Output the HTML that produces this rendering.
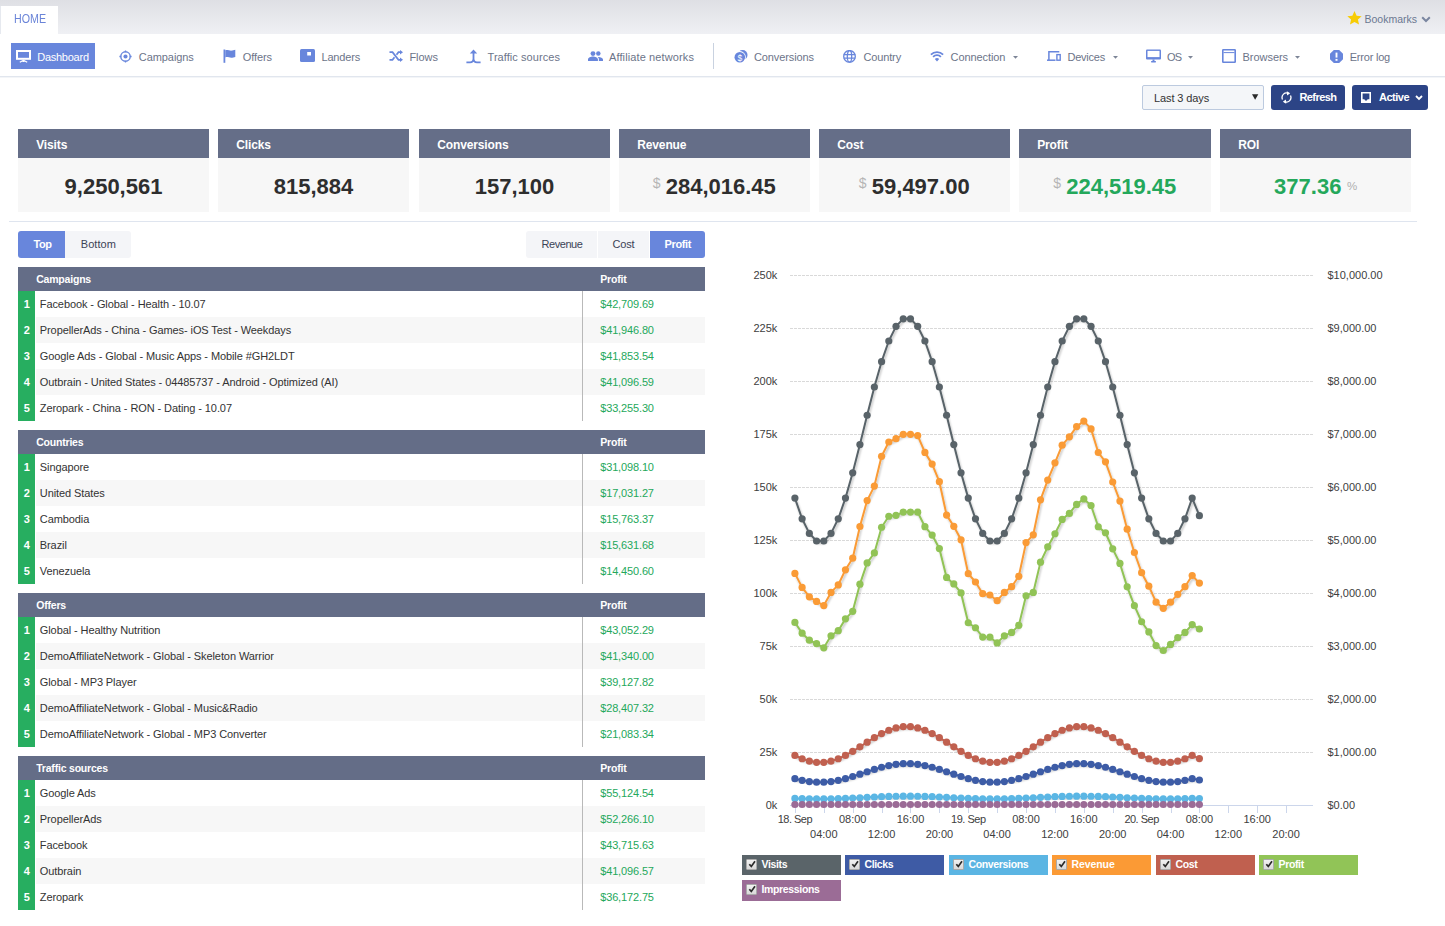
<!DOCTYPE html>
<html><head><meta charset="utf-8"><title>Dashboard</title>
<style>
html,body{margin:0;padding:0;}
body{width:1445px;height:926px;overflow:hidden;position:relative;background:#fff;font-family:"Liberation Sans", sans-serif;}
.t{position:absolute;white-space:pre;}
.b{position:absolute;}
</style></head><body>
<div class="b" style="left:0px;top:0px;width:1445px;height:34px;background:linear-gradient(#dedfe4,#eff0f4);"></div>
<div class="b" style="left:0px;top:6px;width:58px;height:28px;background:#fff;border-left:1px solid #e6e9ef;box-sizing:border-box;"></div>
<div class="t" style="left:13.90px;top:13.14px;font-size:12px;line-height:12px;color:#6a84d8;font-weight:normal;transform:scaleX(0.89);transform-origin:0 0;">HOME</div>
<svg class="b" style="left:1347px;top:11px" width="15" height="14" viewBox="0 0 24 23"><path d="M12 0l3.5 7.6 8.3.9-6.2 5.6 1.8 8.2L12 18.1 4.6 22.3l1.8-8.2L.2 8.5l8.3-.9z" fill="#f7cc05"/></svg>
<div class="t" style="left:1364.50px;top:13.71px;font-size:10.5px;line-height:10.5px;color:#6b7891;font-weight:normal;">Bookmarks</div>
<svg class="b" style="left:1421px;top:16px" width="10" height="7" viewBox="0 0 10 7"><path d="M1.2 1.3L5 5l3.8-3.7" stroke="#7a86a0" stroke-width="2" fill="none"/></svg>
<div class="b" style="left:0px;top:76px;width:1445px;height:1px;background:#e1e6ee;"></div>
<div class="b" style="left:0px;top:77px;width:1445px;height:1px;background:#f3f5f8;"></div>
<div class="b" style="left:11px;top:43px;width:84px;height:26px;background:#6886dc;"></div>
<div class="t" style="left:37.20px;top:52.49px;font-size:11px;line-height:11px;color:#fff;font-weight:normal;letter-spacing:-0.25px;">Dashboard</div>
<svg class="b" style="left:16px;top:50px" width="15" height="13" viewBox="0 0 15 13"><rect x="1" y="1" width="13" height="7.8" fill="none" stroke="#fff" stroke-width="2"/><path d="M7.5 9.8v2.3M7.5 10.2L3.8 12.2M7.5 10.2l3.7 2" stroke="#fff" stroke-width="1.3" fill="none"/></svg>
<div class="t" style="left:138.80px;top:52.49px;font-size:11px;line-height:11px;color:#6c7489;font-weight:normal;letter-spacing:-0.071px;">Campaigns</div>
<div class="t" style="left:242.80px;top:52.49px;font-size:11px;line-height:11px;color:#6c7489;font-weight:normal;letter-spacing:-0.094px;">Offers</div>
<div class="t" style="left:321.50px;top:52.49px;font-size:11px;line-height:11px;color:#6c7489;font-weight:normal;letter-spacing:-0.181px;">Landers</div>
<div class="t" style="left:409.40px;top:52.49px;font-size:11px;line-height:11px;color:#6c7489;font-weight:normal;letter-spacing:-0.026px;">Flows</div>
<div class="t" style="left:487.50px;top:52.49px;font-size:11px;line-height:11px;color:#6c7489;font-weight:normal;letter-spacing:0.065px;">Traffic sources</div>
<div class="t" style="left:609.00px;top:52.49px;font-size:11px;line-height:11px;color:#6c7489;font-weight:normal;letter-spacing:0.119px;">Affiliate networks</div>
<div class="t" style="left:754.00px;top:52.49px;font-size:11px;line-height:11px;color:#6c7489;font-weight:normal;letter-spacing:-0.104px;">Conversions</div>
<div class="t" style="left:863.50px;top:52.49px;font-size:11px;line-height:11px;color:#6c7489;font-weight:normal;letter-spacing:-0.147px;">Country</div>
<div class="t" style="left:950.60px;top:52.49px;font-size:11px;line-height:11px;color:#6c7489;font-weight:normal;letter-spacing:-0.086px;">Connection</div>
<div class="t" style="left:1067.50px;top:52.49px;font-size:11px;line-height:11px;color:#6c7489;font-weight:normal;letter-spacing:-0.233px;">Devices</div>
<div class="t" style="left:1167.00px;top:52.49px;font-size:11px;line-height:11px;color:#6c7489;font-weight:normal;letter-spacing:-0.698px;">OS</div>
<div class="t" style="left:1242.60px;top:52.49px;font-size:11px;line-height:11px;color:#6c7489;font-weight:normal;letter-spacing:-0.056px;">Browsers</div>
<div class="t" style="left:1349.70px;top:52.49px;font-size:11px;line-height:11px;color:#6c7489;font-weight:normal;letter-spacing:-0.209px;">Error log</div>
<svg class="b" style="left:1012.5px;top:56.3px" width="6" height="4" viewBox="0 0 6 4"><path d="M0 0h5L2.5 2.8z" fill="#7d8597"/></svg>
<svg class="b" style="left:1112.9px;top:56.3px" width="6" height="4" viewBox="0 0 6 4"><path d="M0 0h5L2.5 2.8z" fill="#7d8597"/></svg>
<svg class="b" style="left:1188.0px;top:56.3px" width="6" height="4" viewBox="0 0 6 4"><path d="M0 0h5L2.5 2.8z" fill="#7d8597"/></svg>
<svg class="b" style="left:1294.5px;top:56.3px" width="6" height="4" viewBox="0 0 6 4"><path d="M0 0h5L2.5 2.8z" fill="#7d8597"/></svg>
<div class="b" style="left:713px;top:43px;width:1px;height:26px;background:#c9d2e0;"></div>
<svg class="b" style="left:118.5px;top:49.6px" width="13" height="13" viewBox="0 0 13 13"><circle cx="6.5" cy="6.5" r="4.7" fill="none" stroke="#6886dc" stroke-width="1.4"/><circle cx="6.5" cy="6.5" r="2.05" fill="#6886dc"/><path d="M6.5 0.4v1.8M6.5 10.8v1.8M0.4 6.5h1.8M10.8 6.5h1.8" stroke="#6886dc" stroke-width="1.3"/></svg>
<svg class="b" style="left:222.5px;top:49px" width="13" height="14" viewBox="0 0 13 14"><path d="M0.5 0.5h1.8v13.3H0.5z" fill="#6886dc"/><path d="M2.3 1.2c2.5-1 4.5 1 7 0.3l3-0.8v7.2l-3 .8c-2.5.7-4.5-1.3-7-.3z" fill="#6886dc"/></svg>
<svg class="b" style="left:300px;top:49px" width="15" height="13" viewBox="0 0 15 13"><rect x="0" y="0" width="15" height="13" rx="1.5" fill="#6886dc"/><rect x="7.2" y="3" width="3.8" height="3.5" fill="#fff"/></svg>
<svg class="b" style="left:388.5px;top:50px" width="14" height="12" viewBox="0 0 14 12"><path d="M0.5 2.2h3l6 7.6h2.5M0.5 9.8h3l2-2.6M7.5 4.8l2-2.6h2.5" stroke="#6886dc" stroke-width="1.7" fill="none"/><path d="M11 0l3 2.2-3 2.2zM11 7.6l3 2.2-3 2.2z" fill="#6886dc"/></svg>
<svg class="b" style="left:466px;top:48.5px" width="15" height="15" viewBox="0 0 15 15"><path d="M7.5 3.5V9.5Q7.5 13.3 4 13.3H0.4M7.5 9.5Q7.5 13.3 11 13.3H14.6" stroke="#6886dc" stroke-width="1.8" fill="none"/><path d="M3.8 4.6L7.5 0.6l3.7 4z" fill="#6886dc"/></svg>
<svg class="b" style="left:588px;top:50.8px" width="15" height="10" viewBox="0 0 16 11" preserveAspectRatio="none"><circle cx="5.3" cy="2.8" r="2.6" fill="#6886dc"/><circle cx="11" cy="2.8" r="2.4" fill="#6886dc"/><path d="M0 11v-1.8c0-2 3-3.2 5.3-3.2s5.3 1.2 5.3 3.2V11zM11.6 11V9.2c0-1-.5-1.9-1.3-2.5.4-.1.8-.1 1-.1 2 0 4.7 1 4.7 2.8V11z" fill="#6886dc"/></svg>
<svg class="b" style="left:734px;top:49.5px" width="14" height="13" viewBox="0 0 14 13"><circle cx="8.6" cy="5" r="4.9" fill="#6886dc"/><circle cx="5.8" cy="7.2" r="6.1" fill="#fff"/><circle cx="5.8" cy="7.2" r="5.3" fill="#6886dc"/><text x="5.8" y="10.6" font-size="8.5" font-family="Liberation Sans" fill="#fff" text-anchor="middle">$</text></svg>
<svg class="b" style="left:843px;top:49.7px" width="13" height="13" viewBox="0 0 13 13"><circle cx="6.5" cy="6.4" r="5.8" fill="none" stroke="#6886dc" stroke-width="1.3"/><ellipse cx="6.5" cy="6.4" rx="2.2" ry="5.8" fill="none" stroke="#6886dc" stroke-width="1.3"/><path d="M0.8 4.6h11.4M0.8 8.2h11.4" stroke="#6886dc" stroke-width="1.3"/></svg>
<svg class="b" style="left:930px;top:51px" width="14" height="11" viewBox="0 0 14 11"><path d="M0.9 3.6a8.6 8.6 0 0 1 12.2 0M3.1 5.9a5.3 5.3 0 0 1 7.8 0" stroke="#6886dc" stroke-width="1.8" fill="none"/><path d="M4.8 8.1a3.1 3.1 0 0 1 4.4 0L7 10.6z" fill="#6886dc"/></svg>
<svg class="b" style="left:1047px;top:51px" width="14" height="10" viewBox="0 0 14 10"><path d="M1.9 9V0.8h10.4" stroke="#6886dc" stroke-width="1.5" fill="none"/><path d="M0 9.2h8.5" stroke="#6886dc" stroke-width="1.5"/><rect x="9.9" y="3.6" width="3.3" height="5.6" fill="none" stroke="#6886dc" stroke-width="1.4"/></svg>
<svg class="b" style="left:1146px;top:49px" width="15" height="14" viewBox="0 0 15 14"><rect x="0" y="0.4" width="15" height="10.2" rx="1" fill="#6886dc"/><rect x="1.5" y="1.9" width="12" height="6.2" fill="#fff"/><path d="M6.5 10.5h2v1.5h-2z" fill="#6886dc"/><rect x="5" y="12" width="5" height="1.4" rx="0.6" fill="#6886dc"/></svg>
<svg class="b" style="left:1222px;top:49px" width="14" height="14" viewBox="0 0 14 14"><rect x="0.8" y="0.8" width="12.4" height="12.4" rx="0.5" fill="none" stroke="#6886dc" stroke-width="1.6"/><path d="M1.5 3.6h11" stroke="#6886dc" stroke-width="1"/></svg>
<svg class="b" style="left:1329.5px;top:49.8px" width="13" height="13" viewBox="0 0 13 13"><path d="M3.8 0h5.4L13 3.8v5.4L9.2 13H3.8L0 9.2V3.8z" fill="#6886dc"/><path d="M6.5 2.6v5" stroke="#fff" stroke-width="1.9"/><rect x="5.5" y="8.9" width="2" height="1.9" fill="#fff"/></svg>
<div class="b" style="left:1142px;top:85px;width:122px;height:25px;background:#f4f6f9;border:1px solid #bccadf;border-radius:2px;box-sizing:border-box;"></div>
<div class="t" style="left:1154.00px;top:92.69px;font-size:11px;line-height:11px;color:#333;font-weight:normal;letter-spacing:-0.1px;">Last 3 days</div>
<svg class="b" style="left:1252px;top:94px" width="6.5" height="6" viewBox="0 0 6.5 6"><path d="M0 0.3h6.3L3.15 5.8z" fill="#2a2a2a"/></svg>
<div class="b" style="left:1271px;top:85px;width:74px;height:25px;background:#2c4486;border-radius:3px;"></div>
<div class="t" style="left:1299.40px;top:92.49px;font-size:11px;line-height:11px;color:#fff;font-weight:bold;letter-spacing:-0.55px;">Refresh</div>
<svg class="b" style="left:1280.5px;top:91px" width="11" height="13" viewBox="0 0 11 13"><path d="M7.6 2.6A4.3 4.6 0 0 0 1.5 8.5M3.4 10.4A4.3 4.6 0 0 0 9.5 4.5" stroke="#fff" stroke-width="1.3" fill="none"/><path d="M5.8 0.3l3.4 1.9-3.1 2.3zM5.2 12.7l-3.4-1.9 3.1-2.3z" fill="#fff"/></svg>
<div class="b" style="left:1352px;top:85px;width:76px;height:25px;background:#2c4486;border-radius:3px;"></div>
<svg class="b" style="left:1361px;top:92px" width="10" height="11" viewBox="0 0 10 11"><path d="M0 0h10v11H0z" fill="#fff"/><path d="M1.6 1.6h6.8v5.6H6.6L5.9 8.4H4.1L3.4 7.2H1.6z" fill="#2c4486"/></svg>
<div class="t" style="left:1379.00px;top:92.49px;font-size:11px;line-height:11px;color:#fff;font-weight:bold;letter-spacing:-0.5px;">Active</div>
<svg class="b" style="left:1414.5px;top:95px" width="8" height="6" viewBox="0 0 8 6"><path d="M1 1l3 3 3-3" stroke="#fff" stroke-width="1.8" fill="none"/></svg>
<div class="b" style="left:18px;top:129px;width:191px;height:29px;background:#656e88;"></div>
<div class="b" style="left:18px;top:158px;width:191px;height:54px;background:#f7f7f7;"></div>
<div class="t" style="left:36.20px;top:138.74px;font-size:12px;line-height:12px;color:#fff;font-weight:bold;letter-spacing:-0.12px;">Visits</div>
<div class="t" style="left:-186.50px;width:600px;text-align:center;top:175.98px;font-size:22px;line-height:22px;color:#2e2e2e;font-weight:bold;">9,250,561</div>
<div class="b" style="left:218px;top:129px;width:191px;height:29px;background:#656e88;"></div>
<div class="b" style="left:218px;top:158px;width:191px;height:54px;background:#f7f7f7;"></div>
<div class="t" style="left:236.20px;top:138.74px;font-size:12px;line-height:12px;color:#fff;font-weight:bold;letter-spacing:-0.12px;">Clicks</div>
<div class="t" style="left:13.50px;width:600px;text-align:center;top:175.98px;font-size:22px;line-height:22px;color:#2e2e2e;font-weight:bold;">815,884</div>
<div class="b" style="left:419px;top:129px;width:191px;height:29px;background:#656e88;"></div>
<div class="b" style="left:419px;top:158px;width:191px;height:54px;background:#f7f7f7;"></div>
<div class="t" style="left:437.20px;top:138.74px;font-size:12px;line-height:12px;color:#fff;font-weight:bold;letter-spacing:-0.12px;">Conversions</div>
<div class="t" style="left:214.50px;width:600px;text-align:center;top:175.98px;font-size:22px;line-height:22px;color:#2e2e2e;font-weight:bold;">157,100</div>
<div class="b" style="left:619px;top:129px;width:191px;height:29px;background:#656e88;"></div>
<div class="b" style="left:619px;top:158px;width:191px;height:54px;background:#f7f7f7;"></div>
<div class="t" style="left:637.20px;top:138.74px;font-size:12px;line-height:12px;color:#fff;font-weight:bold;letter-spacing:-0.12px;">Revenue</div>
<div class="t" style="left:652.70px;top:176.15px;font-size:14px;line-height:14px;color:#b5b5b5;font-weight:normal;letter-spacing:-0.3px;">$</div>
<div class="t" style="left:665.70px;top:175.98px;font-size:22px;line-height:22px;color:#2e2e2e;font-weight:bold;">284,016.45</div>
<div class="b" style="left:819px;top:129px;width:191px;height:29px;background:#656e88;"></div>
<div class="b" style="left:819px;top:158px;width:191px;height:54px;background:#f7f7f7;"></div>
<div class="t" style="left:837.20px;top:138.74px;font-size:12px;line-height:12px;color:#fff;font-weight:bold;letter-spacing:-0.12px;">Cost</div>
<div class="t" style="left:858.81px;top:176.15px;font-size:14px;line-height:14px;color:#b5b5b5;font-weight:normal;letter-spacing:-0.3px;">$</div>
<div class="t" style="left:871.81px;top:175.98px;font-size:22px;line-height:22px;color:#2e2e2e;font-weight:bold;">59,497.00</div>
<div class="b" style="left:1019px;top:129px;width:192px;height:29px;background:#656e88;"></div>
<div class="b" style="left:1019px;top:158px;width:192px;height:54px;background:#f7f7f7;"></div>
<div class="t" style="left:1037.20px;top:138.74px;font-size:12px;line-height:12px;color:#fff;font-weight:bold;letter-spacing:-0.12px;">Profit</div>
<div class="t" style="left:1053.19px;top:176.15px;font-size:14px;line-height:14px;color:#b5b5b5;font-weight:normal;letter-spacing:-0.3px;">$</div>
<div class="t" style="left:1066.19px;top:175.98px;font-size:22px;line-height:22px;color:#24a85b;font-weight:bold;">224,519.45</div>
<div class="b" style="left:1220px;top:129px;width:191px;height:29px;background:#656e88;"></div>
<div class="b" style="left:1220px;top:158px;width:191px;height:54px;background:#f7f7f7;"></div>
<div class="t" style="left:1238.20px;top:138.74px;font-size:12px;line-height:12px;color:#fff;font-weight:bold;letter-spacing:-0.12px;">ROI</div>
<div class="t" style="left:1274.10px;top:175.98px;font-size:22px;line-height:22px;color:#24a85b;font-weight:bold;">377.36</div>
<div class="t" style="left:1346.90px;top:181.07px;font-size:11.5px;line-height:11.5px;color:#b0b0b0;font-weight:normal;">%</div>
<div class="b" style="left:9px;top:221px;width:1408px;height:1px;background:#dfe5ef;"></div>
<div class="b" style="left:18px;top:231px;width:47px;height:27px;background:#6886dc;border-radius:3px 0 0 3px;"></div>
<div class="b" style="left:65px;top:231px;width:66px;height:27px;background:#f4f5f8;border-radius:0 3px 3px 0;"></div>
<div class="t" style="left:33.40px;top:238.69px;font-size:11px;line-height:11px;color:#fff;font-weight:bold;letter-spacing:-0.4px;">Top</div>
<div class="t" style="left:80.80px;top:238.69px;font-size:11px;line-height:11px;color:#3b4356;font-weight:normal;letter-spacing:0.05px;">Bottom</div>
<div class="b" style="left:526px;top:231px;width:71px;height:27px;background:#f4f5f8;border-radius:3px 0 0 3px;"></div>
<div class="b" style="left:598px;top:231px;width:51px;height:27px;background:#f4f5f8;"></div>
<div class="b" style="left:650px;top:231px;width:55px;height:27px;background:#6886dc;border-radius:0 3px 3px 0;"></div>
<div class="t" style="left:541.50px;top:238.69px;font-size:11px;line-height:11px;color:#3b4356;font-weight:normal;letter-spacing:-0.45px;">Revenue</div>
<div class="t" style="left:612.50px;top:238.69px;font-size:11px;line-height:11px;color:#3b4356;font-weight:normal;letter-spacing:-0.2px;">Cost</div>
<div class="t" style="left:664.60px;top:238.69px;font-size:11px;line-height:11px;color:#fff;font-weight:bold;letter-spacing:-0.4px;">Profit</div>
<div class="b" style="left:18px;top:267px;width:687px;height:24px;background:#646d87;"></div>
<div class="t" style="left:36.20px;top:274.11px;font-size:10.5px;line-height:10.5px;color:#fff;font-weight:bold;letter-spacing:-0.2px;">Campaigns</div>
<div class="t" style="left:600.30px;top:274.11px;font-size:10.5px;line-height:10.5px;color:#fff;font-weight:bold;letter-spacing:-0.2px;">Profit</div>
<div class="b" style="left:18px;top:291px;width:17px;height:130px;background:#27ae60;"></div>
<div class="t" style="left:23.80px;top:298.99px;font-size:11px;line-height:11px;color:#fff;font-weight:bold;">1</div>
<div class="t" style="left:39.80px;top:298.99px;font-size:11px;line-height:11px;color:#333;font-weight:normal;letter-spacing:-0.09px;">Facebook - Global - Health - 10.07</div>
<div class="t" style="left:600.20px;top:298.99px;font-size:11px;line-height:11px;color:#24a85b;font-weight:normal;letter-spacing:-0.14px;">$42,709.69</div>
<div class="b" style="left:36px;top:317px;width:669px;height:26px;background:#f7f7f7;"></div>
<div class="t" style="left:23.80px;top:324.99px;font-size:11px;line-height:11px;color:#fff;font-weight:bold;">2</div>
<div class="t" style="left:39.80px;top:324.99px;font-size:11px;line-height:11px;color:#333;font-weight:normal;letter-spacing:-0.09px;">PropellerAds - China - Games- iOS Test - Weekdays</div>
<div class="t" style="left:600.20px;top:324.99px;font-size:11px;line-height:11px;color:#24a85b;font-weight:normal;letter-spacing:-0.14px;">$41,946.80</div>
<div class="t" style="left:23.80px;top:350.99px;font-size:11px;line-height:11px;color:#fff;font-weight:bold;">3</div>
<div class="t" style="left:39.80px;top:350.99px;font-size:11px;line-height:11px;color:#333;font-weight:normal;letter-spacing:-0.09px;">Google Ads - Global - Music Apps - Mobile #GH2LDT</div>
<div class="t" style="left:600.20px;top:350.99px;font-size:11px;line-height:11px;color:#24a85b;font-weight:normal;letter-spacing:-0.14px;">$41,853.54</div>
<div class="b" style="left:36px;top:369px;width:669px;height:26px;background:#f7f7f7;"></div>
<div class="t" style="left:23.80px;top:376.99px;font-size:11px;line-height:11px;color:#fff;font-weight:bold;">4</div>
<div class="t" style="left:39.80px;top:376.99px;font-size:11px;line-height:11px;color:#333;font-weight:normal;letter-spacing:-0.09px;">Outbrain - United States - 04485737 - Android - Optimized (AI)</div>
<div class="t" style="left:600.20px;top:376.99px;font-size:11px;line-height:11px;color:#24a85b;font-weight:normal;letter-spacing:-0.14px;">$41,096.59</div>
<div class="t" style="left:23.80px;top:402.99px;font-size:11px;line-height:11px;color:#fff;font-weight:bold;">5</div>
<div class="t" style="left:39.80px;top:402.99px;font-size:11px;line-height:11px;color:#333;font-weight:normal;letter-spacing:-0.09px;">Zeropark - China - RON - Dating - 10.07</div>
<div class="t" style="left:600.20px;top:402.99px;font-size:11px;line-height:11px;color:#24a85b;font-weight:normal;letter-spacing:-0.14px;">$33,255.30</div>
<div class="b" style="left:582px;top:291px;width:1px;height:130px;background:#b9b9b9;"></div>
<div class="b" style="left:18px;top:430px;width:687px;height:24px;background:#646d87;"></div>
<div class="t" style="left:36.20px;top:437.11px;font-size:10.5px;line-height:10.5px;color:#fff;font-weight:bold;letter-spacing:-0.2px;">Countries</div>
<div class="t" style="left:600.30px;top:437.11px;font-size:10.5px;line-height:10.5px;color:#fff;font-weight:bold;letter-spacing:-0.2px;">Profit</div>
<div class="b" style="left:18px;top:454px;width:17px;height:130px;background:#27ae60;"></div>
<div class="t" style="left:23.80px;top:461.99px;font-size:11px;line-height:11px;color:#fff;font-weight:bold;">1</div>
<div class="t" style="left:39.80px;top:461.99px;font-size:11px;line-height:11px;color:#333;font-weight:normal;letter-spacing:-0.09px;">Singapore</div>
<div class="t" style="left:600.20px;top:461.99px;font-size:11px;line-height:11px;color:#24a85b;font-weight:normal;letter-spacing:-0.14px;">$31,098.10</div>
<div class="b" style="left:36px;top:480px;width:669px;height:26px;background:#f7f7f7;"></div>
<div class="t" style="left:23.80px;top:487.99px;font-size:11px;line-height:11px;color:#fff;font-weight:bold;">2</div>
<div class="t" style="left:39.80px;top:487.99px;font-size:11px;line-height:11px;color:#333;font-weight:normal;letter-spacing:-0.09px;">United States</div>
<div class="t" style="left:600.20px;top:487.99px;font-size:11px;line-height:11px;color:#24a85b;font-weight:normal;letter-spacing:-0.14px;">$17,031.27</div>
<div class="t" style="left:23.80px;top:513.99px;font-size:11px;line-height:11px;color:#fff;font-weight:bold;">3</div>
<div class="t" style="left:39.80px;top:513.99px;font-size:11px;line-height:11px;color:#333;font-weight:normal;letter-spacing:-0.09px;">Cambodia</div>
<div class="t" style="left:600.20px;top:513.99px;font-size:11px;line-height:11px;color:#24a85b;font-weight:normal;letter-spacing:-0.14px;">$15,763.37</div>
<div class="b" style="left:36px;top:532px;width:669px;height:26px;background:#f7f7f7;"></div>
<div class="t" style="left:23.80px;top:539.99px;font-size:11px;line-height:11px;color:#fff;font-weight:bold;">4</div>
<div class="t" style="left:39.80px;top:539.99px;font-size:11px;line-height:11px;color:#333;font-weight:normal;letter-spacing:-0.09px;">Brazil</div>
<div class="t" style="left:600.20px;top:539.99px;font-size:11px;line-height:11px;color:#24a85b;font-weight:normal;letter-spacing:-0.14px;">$15,631.68</div>
<div class="t" style="left:23.80px;top:565.99px;font-size:11px;line-height:11px;color:#fff;font-weight:bold;">5</div>
<div class="t" style="left:39.80px;top:565.99px;font-size:11px;line-height:11px;color:#333;font-weight:normal;letter-spacing:-0.09px;">Venezuela</div>
<div class="t" style="left:600.20px;top:565.99px;font-size:11px;line-height:11px;color:#24a85b;font-weight:normal;letter-spacing:-0.14px;">$14,450.60</div>
<div class="b" style="left:582px;top:454px;width:1px;height:130px;background:#b9b9b9;"></div>
<div class="b" style="left:18px;top:593px;width:687px;height:24px;background:#646d87;"></div>
<div class="t" style="left:36.20px;top:600.11px;font-size:10.5px;line-height:10.5px;color:#fff;font-weight:bold;letter-spacing:-0.2px;">Offers</div>
<div class="t" style="left:600.30px;top:600.11px;font-size:10.5px;line-height:10.5px;color:#fff;font-weight:bold;letter-spacing:-0.2px;">Profit</div>
<div class="b" style="left:18px;top:617px;width:17px;height:130px;background:#27ae60;"></div>
<div class="t" style="left:23.80px;top:624.99px;font-size:11px;line-height:11px;color:#fff;font-weight:bold;">1</div>
<div class="t" style="left:39.80px;top:624.99px;font-size:11px;line-height:11px;color:#333;font-weight:normal;letter-spacing:-0.09px;">Global - Healthy Nutrition</div>
<div class="t" style="left:600.20px;top:624.99px;font-size:11px;line-height:11px;color:#24a85b;font-weight:normal;letter-spacing:-0.14px;">$43,052.29</div>
<div class="b" style="left:36px;top:643px;width:669px;height:26px;background:#f7f7f7;"></div>
<div class="t" style="left:23.80px;top:650.99px;font-size:11px;line-height:11px;color:#fff;font-weight:bold;">2</div>
<div class="t" style="left:39.80px;top:650.99px;font-size:11px;line-height:11px;color:#333;font-weight:normal;letter-spacing:-0.09px;">DemoAffiliateNetwork - Global - Skeleton Warrior</div>
<div class="t" style="left:600.20px;top:650.99px;font-size:11px;line-height:11px;color:#24a85b;font-weight:normal;letter-spacing:-0.14px;">$41,340.00</div>
<div class="t" style="left:23.80px;top:676.99px;font-size:11px;line-height:11px;color:#fff;font-weight:bold;">3</div>
<div class="t" style="left:39.80px;top:676.99px;font-size:11px;line-height:11px;color:#333;font-weight:normal;letter-spacing:-0.09px;">Global - MP3 Player</div>
<div class="t" style="left:600.20px;top:676.99px;font-size:11px;line-height:11px;color:#24a85b;font-weight:normal;letter-spacing:-0.14px;">$39,127.82</div>
<div class="b" style="left:36px;top:695px;width:669px;height:26px;background:#f7f7f7;"></div>
<div class="t" style="left:23.80px;top:702.99px;font-size:11px;line-height:11px;color:#fff;font-weight:bold;">4</div>
<div class="t" style="left:39.80px;top:702.99px;font-size:11px;line-height:11px;color:#333;font-weight:normal;letter-spacing:-0.09px;">DemoAffiliateNetwork - Global - Music&amp;Radio</div>
<div class="t" style="left:600.20px;top:702.99px;font-size:11px;line-height:11px;color:#24a85b;font-weight:normal;letter-spacing:-0.14px;">$28,407.32</div>
<div class="t" style="left:23.80px;top:728.99px;font-size:11px;line-height:11px;color:#fff;font-weight:bold;">5</div>
<div class="t" style="left:39.80px;top:728.99px;font-size:11px;line-height:11px;color:#333;font-weight:normal;letter-spacing:-0.09px;">DemoAffiliateNetwork - Global - MP3 Converter</div>
<div class="t" style="left:600.20px;top:728.99px;font-size:11px;line-height:11px;color:#24a85b;font-weight:normal;letter-spacing:-0.14px;">$21,083.34</div>
<div class="b" style="left:582px;top:617px;width:1px;height:130px;background:#b9b9b9;"></div>
<div class="b" style="left:18px;top:756px;width:687px;height:24px;background:#646d87;"></div>
<div class="t" style="left:36.20px;top:763.11px;font-size:10.5px;line-height:10.5px;color:#fff;font-weight:bold;letter-spacing:-0.2px;">Traffic sources</div>
<div class="t" style="left:600.30px;top:763.11px;font-size:10.5px;line-height:10.5px;color:#fff;font-weight:bold;letter-spacing:-0.2px;">Profit</div>
<div class="b" style="left:18px;top:780px;width:17px;height:130px;background:#27ae60;"></div>
<div class="t" style="left:23.80px;top:787.99px;font-size:11px;line-height:11px;color:#fff;font-weight:bold;">1</div>
<div class="t" style="left:39.80px;top:787.99px;font-size:11px;line-height:11px;color:#333;font-weight:normal;letter-spacing:-0.09px;">Google Ads</div>
<div class="t" style="left:600.20px;top:787.99px;font-size:11px;line-height:11px;color:#24a85b;font-weight:normal;letter-spacing:-0.14px;">$55,124.54</div>
<div class="b" style="left:36px;top:806px;width:669px;height:26px;background:#f7f7f7;"></div>
<div class="t" style="left:23.80px;top:813.99px;font-size:11px;line-height:11px;color:#fff;font-weight:bold;">2</div>
<div class="t" style="left:39.80px;top:813.99px;font-size:11px;line-height:11px;color:#333;font-weight:normal;letter-spacing:-0.09px;">PropellerAds</div>
<div class="t" style="left:600.20px;top:813.99px;font-size:11px;line-height:11px;color:#24a85b;font-weight:normal;letter-spacing:-0.14px;">$52,266.10</div>
<div class="t" style="left:23.80px;top:839.99px;font-size:11px;line-height:11px;color:#fff;font-weight:bold;">3</div>
<div class="t" style="left:39.80px;top:839.99px;font-size:11px;line-height:11px;color:#333;font-weight:normal;letter-spacing:-0.09px;">Facebook</div>
<div class="t" style="left:600.20px;top:839.99px;font-size:11px;line-height:11px;color:#24a85b;font-weight:normal;letter-spacing:-0.14px;">$43,715.63</div>
<div class="b" style="left:36px;top:858px;width:669px;height:26px;background:#f7f7f7;"></div>
<div class="t" style="left:23.80px;top:865.99px;font-size:11px;line-height:11px;color:#fff;font-weight:bold;">4</div>
<div class="t" style="left:39.80px;top:865.99px;font-size:11px;line-height:11px;color:#333;font-weight:normal;letter-spacing:-0.09px;">Outbrain</div>
<div class="t" style="left:600.20px;top:865.99px;font-size:11px;line-height:11px;color:#24a85b;font-weight:normal;letter-spacing:-0.14px;">$41,096.57</div>
<div class="t" style="left:23.80px;top:891.99px;font-size:11px;line-height:11px;color:#fff;font-weight:bold;">5</div>
<div class="t" style="left:39.80px;top:891.99px;font-size:11px;line-height:11px;color:#333;font-weight:normal;letter-spacing:-0.09px;">Zeropark</div>
<div class="t" style="left:600.20px;top:891.99px;font-size:11px;line-height:11px;color:#24a85b;font-weight:normal;letter-spacing:-0.14px;">$36,172.75</div>
<div class="b" style="left:582px;top:780px;width:1px;height:130px;background:#b9b9b9;"></div>
<svg class="b" style="left:0;top:0" width="1445" height="926" viewBox="0 0 1445 926">
<defs><filter id="sh" x="-5%" y="-5%" width="110%" height="110%"><feGaussianBlur in="SourceAlpha" stdDeviation="1.2"/><feOffset dx="1" dy="1.5"/><feComponentTransfer><feFuncA type="linear" slope="0.25"/></feComponentTransfer><feMerge><feMergeNode/><feMergeNode in="SourceGraphic"/></feMerge></filter></defs>
<path d="M790 275.5H1313" stroke="#d9d9d9" stroke-width="1" stroke-dasharray="3,1"/>
<path d="M790 328.5H1313" stroke="#d9d9d9" stroke-width="1" stroke-dasharray="3,1"/>
<path d="M790 381.5H1313" stroke="#d9d9d9" stroke-width="1" stroke-dasharray="3,1"/>
<path d="M790 434.5H1313" stroke="#d9d9d9" stroke-width="1" stroke-dasharray="3,1"/>
<path d="M790 487.5H1313" stroke="#d9d9d9" stroke-width="1" stroke-dasharray="3,1"/>
<path d="M790 540.5H1313" stroke="#d9d9d9" stroke-width="1" stroke-dasharray="3,1"/>
<path d="M790 593.5H1313" stroke="#d9d9d9" stroke-width="1" stroke-dasharray="3,1"/>
<path d="M790 646.5H1313" stroke="#d9d9d9" stroke-width="1" stroke-dasharray="3,1"/>
<path d="M790 699.5H1313" stroke="#d9d9d9" stroke-width="1" stroke-dasharray="3,1"/>
<path d="M790 752.5H1313" stroke="#d9d9d9" stroke-width="1" stroke-dasharray="3,1"/>
<path d="M790 805.5H1313" stroke="#ccd6eb" stroke-width="1"/>
<path d="M795.5 806V813" stroke="#ccd6eb" stroke-width="1"/>
<path d="M824.5 806V813" stroke="#ccd6eb" stroke-width="1"/>
<path d="M853.5 806V813" stroke="#ccd6eb" stroke-width="1"/>
<path d="M882.5 806V813" stroke="#ccd6eb" stroke-width="1"/>
<path d="M910.5 806V813" stroke="#ccd6eb" stroke-width="1"/>
<path d="M939.5 806V813" stroke="#ccd6eb" stroke-width="1"/>
<path d="M968.5 806V813" stroke="#ccd6eb" stroke-width="1"/>
<path d="M997.5 806V813" stroke="#ccd6eb" stroke-width="1"/>
<path d="M1026.5 806V813" stroke="#ccd6eb" stroke-width="1"/>
<path d="M1055.5 806V813" stroke="#ccd6eb" stroke-width="1"/>
<path d="M1084.5 806V813" stroke="#ccd6eb" stroke-width="1"/>
<path d="M1113.5 806V813" stroke="#ccd6eb" stroke-width="1"/>
<path d="M1142.5 806V813" stroke="#ccd6eb" stroke-width="1"/>
<path d="M1171.5 806V813" stroke="#ccd6eb" stroke-width="1"/>
<path d="M1199.5 806V813" stroke="#ccd6eb" stroke-width="1"/>
<path d="M1228.5 806V813" stroke="#ccd6eb" stroke-width="1"/>
<path d="M1257.5 806V813" stroke="#ccd6eb" stroke-width="1"/>
<path d="M1286.5 806V813" stroke="#ccd6eb" stroke-width="1"/>
<text x="777.3" y="279.2" text-anchor="end" font-family="Liberation Sans, sans-serif" font-size="11" fill="#404040">250k</text>
<text x="1327.5" y="279.2" font-family="Liberation Sans, sans-serif" font-size="11" fill="#404040">$10,000.00</text>
<text x="777.3" y="332.2" text-anchor="end" font-family="Liberation Sans, sans-serif" font-size="11" fill="#404040">225k</text>
<text x="1327.5" y="332.2" font-family="Liberation Sans, sans-serif" font-size="11" fill="#404040">$9,000.00</text>
<text x="777.3" y="385.2" text-anchor="end" font-family="Liberation Sans, sans-serif" font-size="11" fill="#404040">200k</text>
<text x="1327.5" y="385.2" font-family="Liberation Sans, sans-serif" font-size="11" fill="#404040">$8,000.00</text>
<text x="777.3" y="438.2" text-anchor="end" font-family="Liberation Sans, sans-serif" font-size="11" fill="#404040">175k</text>
<text x="1327.5" y="438.2" font-family="Liberation Sans, sans-serif" font-size="11" fill="#404040">$7,000.00</text>
<text x="777.3" y="491.2" text-anchor="end" font-family="Liberation Sans, sans-serif" font-size="11" fill="#404040">150k</text>
<text x="1327.5" y="491.2" font-family="Liberation Sans, sans-serif" font-size="11" fill="#404040">$6,000.00</text>
<text x="777.3" y="544.2" text-anchor="end" font-family="Liberation Sans, sans-serif" font-size="11" fill="#404040">125k</text>
<text x="1327.5" y="544.2" font-family="Liberation Sans, sans-serif" font-size="11" fill="#404040">$5,000.00</text>
<text x="777.3" y="597.2" text-anchor="end" font-family="Liberation Sans, sans-serif" font-size="11" fill="#404040">100k</text>
<text x="1327.5" y="597.2" font-family="Liberation Sans, sans-serif" font-size="11" fill="#404040">$4,000.00</text>
<text x="777.3" y="650.2" text-anchor="end" font-family="Liberation Sans, sans-serif" font-size="11" fill="#404040">75k</text>
<text x="1327.5" y="650.2" font-family="Liberation Sans, sans-serif" font-size="11" fill="#404040">$3,000.00</text>
<text x="777.3" y="703.2" text-anchor="end" font-family="Liberation Sans, sans-serif" font-size="11" fill="#404040">50k</text>
<text x="1327.5" y="703.2" font-family="Liberation Sans, sans-serif" font-size="11" fill="#404040">$2,000.00</text>
<text x="777.3" y="756.2" text-anchor="end" font-family="Liberation Sans, sans-serif" font-size="11" fill="#404040">25k</text>
<text x="1327.5" y="756.2" font-family="Liberation Sans, sans-serif" font-size="11" fill="#404040">$1,000.00</text>
<text x="777.3" y="809.2" text-anchor="end" font-family="Liberation Sans, sans-serif" font-size="11" fill="#404040">0k</text>
<text x="1327.5" y="809.2" font-family="Liberation Sans, sans-serif" font-size="11" fill="#404040">$0.00</text>
<text x="794.9" y="822.6" text-anchor="middle" font-family="Liberation Sans, sans-serif" font-size="11" fill="#404040" letter-spacing="-0.5">18. Sep</text>
<text x="823.8" y="837.9" text-anchor="middle" font-family="Liberation Sans, sans-serif" font-size="11" fill="#404040">04:00</text>
<text x="852.7" y="822.6" text-anchor="middle" font-family="Liberation Sans, sans-serif" font-size="11" fill="#404040" letter-spacing="0">08:00</text>
<text x="881.6" y="837.9" text-anchor="middle" font-family="Liberation Sans, sans-serif" font-size="11" fill="#404040">12:00</text>
<text x="910.5" y="822.6" text-anchor="middle" font-family="Liberation Sans, sans-serif" font-size="11" fill="#404040" letter-spacing="0">16:00</text>
<text x="939.4" y="837.9" text-anchor="middle" font-family="Liberation Sans, sans-serif" font-size="11" fill="#404040">20:00</text>
<text x="968.3" y="822.6" text-anchor="middle" font-family="Liberation Sans, sans-serif" font-size="11" fill="#404040" letter-spacing="-0.5">19. Sep</text>
<text x="997.1" y="837.9" text-anchor="middle" font-family="Liberation Sans, sans-serif" font-size="11" fill="#404040">04:00</text>
<text x="1026.0" y="822.6" text-anchor="middle" font-family="Liberation Sans, sans-serif" font-size="11" fill="#404040" letter-spacing="0">08:00</text>
<text x="1054.9" y="837.9" text-anchor="middle" font-family="Liberation Sans, sans-serif" font-size="11" fill="#404040">12:00</text>
<text x="1083.8" y="822.6" text-anchor="middle" font-family="Liberation Sans, sans-serif" font-size="11" fill="#404040" letter-spacing="0">16:00</text>
<text x="1112.7" y="837.9" text-anchor="middle" font-family="Liberation Sans, sans-serif" font-size="11" fill="#404040">20:00</text>
<text x="1141.6" y="822.6" text-anchor="middle" font-family="Liberation Sans, sans-serif" font-size="11" fill="#404040" letter-spacing="-0.5">20. Sep</text>
<text x="1170.5" y="837.9" text-anchor="middle" font-family="Liberation Sans, sans-serif" font-size="11" fill="#404040">04:00</text>
<text x="1199.4" y="822.6" text-anchor="middle" font-family="Liberation Sans, sans-serif" font-size="11" fill="#404040" letter-spacing="0">08:00</text>
<text x="1228.3" y="837.9" text-anchor="middle" font-family="Liberation Sans, sans-serif" font-size="11" fill="#404040">12:00</text>
<text x="1257.2" y="822.6" text-anchor="middle" font-family="Liberation Sans, sans-serif" font-size="11" fill="#404040" letter-spacing="0">16:00</text>
<text x="1286.1" y="837.9" text-anchor="middle" font-family="Liberation Sans, sans-serif" font-size="11" fill="#404040">20:00</text>
<polyline points="794.90,498.12 802.12,518.80 809.35,533.43 816.57,541.00 823.79,541.00 831.02,533.43 838.24,518.80 845.46,498.12 852.69,472.78 859.91,444.53 867.13,415.27 874.36,387.02 881.58,361.68 888.80,341.00 896.02,326.37 903.25,318.80 910.47,318.80 917.69,326.37 924.92,341.00 932.14,361.68 939.36,387.02 946.59,415.27 953.81,444.53 961.03,472.78 968.26,498.12 975.48,518.80 982.70,533.43 989.93,541.00 997.15,541.00 1004.37,533.43 1011.60,518.80 1018.82,498.12 1026.04,472.78 1033.27,444.53 1040.49,415.27 1047.71,387.02 1054.94,361.68 1062.16,341.00 1069.38,326.37 1076.60,318.80 1083.83,318.80 1091.05,326.37 1098.27,341.00 1105.50,361.68 1112.72,387.02 1119.94,415.27 1127.17,444.53 1134.39,472.78 1141.61,498.12 1148.84,518.80 1156.06,533.43 1163.28,541.00 1170.51,541.00 1177.73,533.43 1184.95,518.80 1192.18,498.12 1199.40,515.70" fill="none" stroke="#596369" stroke-width="2" stroke-linejoin="round" filter="url(#sh)"/>
<g fill="#596369"><circle cx="794.90" cy="498.12" r="3.6"/><circle cx="802.12" cy="518.80" r="3.6"/><circle cx="809.35" cy="533.43" r="3.6"/><circle cx="816.57" cy="541.00" r="3.6"/><circle cx="823.79" cy="541.00" r="3.6"/><circle cx="831.02" cy="533.43" r="3.6"/><circle cx="838.24" cy="518.80" r="3.6"/><circle cx="845.46" cy="498.12" r="3.6"/><circle cx="852.69" cy="472.78" r="3.6"/><circle cx="859.91" cy="444.53" r="3.6"/><circle cx="867.13" cy="415.27" r="3.6"/><circle cx="874.36" cy="387.02" r="3.6"/><circle cx="881.58" cy="361.68" r="3.6"/><circle cx="888.80" cy="341.00" r="3.6"/><circle cx="896.02" cy="326.37" r="3.6"/><circle cx="903.25" cy="318.80" r="3.6"/><circle cx="910.47" cy="318.80" r="3.6"/><circle cx="917.69" cy="326.37" r="3.6"/><circle cx="924.92" cy="341.00" r="3.6"/><circle cx="932.14" cy="361.68" r="3.6"/><circle cx="939.36" cy="387.02" r="3.6"/><circle cx="946.59" cy="415.27" r="3.6"/><circle cx="953.81" cy="444.53" r="3.6"/><circle cx="961.03" cy="472.78" r="3.6"/><circle cx="968.26" cy="498.12" r="3.6"/><circle cx="975.48" cy="518.80" r="3.6"/><circle cx="982.70" cy="533.43" r="3.6"/><circle cx="989.93" cy="541.00" r="3.6"/><circle cx="997.15" cy="541.00" r="3.6"/><circle cx="1004.37" cy="533.43" r="3.6"/><circle cx="1011.60" cy="518.80" r="3.6"/><circle cx="1018.82" cy="498.12" r="3.6"/><circle cx="1026.04" cy="472.78" r="3.6"/><circle cx="1033.27" cy="444.53" r="3.6"/><circle cx="1040.49" cy="415.27" r="3.6"/><circle cx="1047.71" cy="387.02" r="3.6"/><circle cx="1054.94" cy="361.68" r="3.6"/><circle cx="1062.16" cy="341.00" r="3.6"/><circle cx="1069.38" cy="326.37" r="3.6"/><circle cx="1076.60" cy="318.80" r="3.6"/><circle cx="1083.83" cy="318.80" r="3.6"/><circle cx="1091.05" cy="326.37" r="3.6"/><circle cx="1098.27" cy="341.00" r="3.6"/><circle cx="1105.50" cy="361.68" r="3.6"/><circle cx="1112.72" cy="387.02" r="3.6"/><circle cx="1119.94" cy="415.27" r="3.6"/><circle cx="1127.17" cy="444.53" r="3.6"/><circle cx="1134.39" cy="472.78" r="3.6"/><circle cx="1141.61" cy="498.12" r="3.6"/><circle cx="1148.84" cy="518.80" r="3.6"/><circle cx="1156.06" cy="533.43" r="3.6"/><circle cx="1163.28" cy="541.00" r="3.6"/><circle cx="1170.51" cy="541.00" r="3.6"/><circle cx="1177.73" cy="533.43" r="3.6"/><circle cx="1184.95" cy="518.80" r="3.6"/><circle cx="1192.18" cy="498.12" r="3.6"/><circle cx="1199.40" cy="515.70" r="3.6"/></g>
<polyline points="794.90,778.63 802.12,780.35 809.35,781.57 816.57,782.20 823.79,782.20 831.02,781.57 838.24,780.35 845.46,778.63 852.69,776.52 859.91,774.17 867.13,771.73 874.36,769.38 881.58,767.27 888.80,765.55 896.02,764.33 903.25,763.70 910.47,763.70 917.69,764.33 924.92,765.55 932.14,767.27 939.36,769.38 946.59,771.73 953.81,774.17 961.03,776.52 968.26,778.63 975.48,780.35 982.70,781.57 989.93,782.20 997.15,782.20 1004.37,781.57 1011.60,780.35 1018.82,778.63 1026.04,776.52 1033.27,774.17 1040.49,771.73 1047.71,769.38 1054.94,767.27 1062.16,765.55 1069.38,764.33 1076.60,763.70 1083.83,763.70 1091.05,764.33 1098.27,765.55 1105.50,767.27 1112.72,769.38 1119.94,771.73 1127.17,774.17 1134.39,776.52 1141.61,778.63 1148.84,780.35 1156.06,781.57 1163.28,782.20 1170.51,782.20 1177.73,781.57 1184.95,780.35 1192.18,778.63 1199.40,780.00" fill="none" stroke="#3d5ca6" stroke-width="2" stroke-linejoin="round" filter="url(#sh)"/>
<g fill="#3d5ca6"><circle cx="794.90" cy="778.63" r="3.6"/><circle cx="802.12" cy="780.35" r="3.6"/><circle cx="809.35" cy="781.57" r="3.6"/><circle cx="816.57" cy="782.20" r="3.6"/><circle cx="823.79" cy="782.20" r="3.6"/><circle cx="831.02" cy="781.57" r="3.6"/><circle cx="838.24" cy="780.35" r="3.6"/><circle cx="845.46" cy="778.63" r="3.6"/><circle cx="852.69" cy="776.52" r="3.6"/><circle cx="859.91" cy="774.17" r="3.6"/><circle cx="867.13" cy="771.73" r="3.6"/><circle cx="874.36" cy="769.38" r="3.6"/><circle cx="881.58" cy="767.27" r="3.6"/><circle cx="888.80" cy="765.55" r="3.6"/><circle cx="896.02" cy="764.33" r="3.6"/><circle cx="903.25" cy="763.70" r="3.6"/><circle cx="910.47" cy="763.70" r="3.6"/><circle cx="917.69" cy="764.33" r="3.6"/><circle cx="924.92" cy="765.55" r="3.6"/><circle cx="932.14" cy="767.27" r="3.6"/><circle cx="939.36" cy="769.38" r="3.6"/><circle cx="946.59" cy="771.73" r="3.6"/><circle cx="953.81" cy="774.17" r="3.6"/><circle cx="961.03" cy="776.52" r="3.6"/><circle cx="968.26" cy="778.63" r="3.6"/><circle cx="975.48" cy="780.35" r="3.6"/><circle cx="982.70" cy="781.57" r="3.6"/><circle cx="989.93" cy="782.20" r="3.6"/><circle cx="997.15" cy="782.20" r="3.6"/><circle cx="1004.37" cy="781.57" r="3.6"/><circle cx="1011.60" cy="780.35" r="3.6"/><circle cx="1018.82" cy="778.63" r="3.6"/><circle cx="1026.04" cy="776.52" r="3.6"/><circle cx="1033.27" cy="774.17" r="3.6"/><circle cx="1040.49" cy="771.73" r="3.6"/><circle cx="1047.71" cy="769.38" r="3.6"/><circle cx="1054.94" cy="767.27" r="3.6"/><circle cx="1062.16" cy="765.55" r="3.6"/><circle cx="1069.38" cy="764.33" r="3.6"/><circle cx="1076.60" cy="763.70" r="3.6"/><circle cx="1083.83" cy="763.70" r="3.6"/><circle cx="1091.05" cy="764.33" r="3.6"/><circle cx="1098.27" cy="765.55" r="3.6"/><circle cx="1105.50" cy="767.27" r="3.6"/><circle cx="1112.72" cy="769.38" r="3.6"/><circle cx="1119.94" cy="771.73" r="3.6"/><circle cx="1127.17" cy="774.17" r="3.6"/><circle cx="1134.39" cy="776.52" r="3.6"/><circle cx="1141.61" cy="778.63" r="3.6"/><circle cx="1148.84" cy="780.35" r="3.6"/><circle cx="1156.06" cy="781.57" r="3.6"/><circle cx="1163.28" cy="782.20" r="3.6"/><circle cx="1170.51" cy="782.20" r="3.6"/><circle cx="1177.73" cy="781.57" r="3.6"/><circle cx="1184.95" cy="780.35" r="3.6"/><circle cx="1192.18" cy="778.63" r="3.6"/><circle cx="1199.40" cy="780.00" r="3.6"/></g>
<polyline points="794.90,798.40 802.12,798.66 809.35,798.84 816.57,798.94 823.79,798.94 831.02,798.84 838.24,798.66 845.46,798.40 852.69,798.09 859.91,797.73 867.13,797.37 874.36,797.01 881.58,796.70 888.80,796.44 896.02,796.26 903.25,796.16 910.47,796.16 917.69,796.26 924.92,796.44 932.14,796.70 939.36,797.01 946.59,797.37 953.81,797.73 961.03,798.09 968.26,798.40 975.48,798.66 982.70,798.84 989.93,798.94 997.15,798.94 1004.37,798.84 1011.60,798.66 1018.82,798.40 1026.04,798.09 1033.27,797.73 1040.49,797.37 1047.71,797.01 1054.94,796.70 1062.16,796.44 1069.38,796.26 1076.60,796.16 1083.83,796.16 1091.05,796.26 1098.27,796.44 1105.50,796.70 1112.72,797.01 1119.94,797.37 1127.17,797.73 1134.39,798.09 1141.61,798.40 1148.84,798.66 1156.06,798.84 1163.28,798.94 1170.51,798.94 1177.73,798.84 1184.95,798.66 1192.18,798.40 1199.40,798.60" fill="none" stroke="#5bb6e4" stroke-width="2" stroke-linejoin="round" filter="url(#sh)"/>
<g fill="#5bb6e4"><circle cx="794.90" cy="798.40" r="3.6"/><circle cx="802.12" cy="798.66" r="3.6"/><circle cx="809.35" cy="798.84" r="3.6"/><circle cx="816.57" cy="798.94" r="3.6"/><circle cx="823.79" cy="798.94" r="3.6"/><circle cx="831.02" cy="798.84" r="3.6"/><circle cx="838.24" cy="798.66" r="3.6"/><circle cx="845.46" cy="798.40" r="3.6"/><circle cx="852.69" cy="798.09" r="3.6"/><circle cx="859.91" cy="797.73" r="3.6"/><circle cx="867.13" cy="797.37" r="3.6"/><circle cx="874.36" cy="797.01" r="3.6"/><circle cx="881.58" cy="796.70" r="3.6"/><circle cx="888.80" cy="796.44" r="3.6"/><circle cx="896.02" cy="796.26" r="3.6"/><circle cx="903.25" cy="796.16" r="3.6"/><circle cx="910.47" cy="796.16" r="3.6"/><circle cx="917.69" cy="796.26" r="3.6"/><circle cx="924.92" cy="796.44" r="3.6"/><circle cx="932.14" cy="796.70" r="3.6"/><circle cx="939.36" cy="797.01" r="3.6"/><circle cx="946.59" cy="797.37" r="3.6"/><circle cx="953.81" cy="797.73" r="3.6"/><circle cx="961.03" cy="798.09" r="3.6"/><circle cx="968.26" cy="798.40" r="3.6"/><circle cx="975.48" cy="798.66" r="3.6"/><circle cx="982.70" cy="798.84" r="3.6"/><circle cx="989.93" cy="798.94" r="3.6"/><circle cx="997.15" cy="798.94" r="3.6"/><circle cx="1004.37" cy="798.84" r="3.6"/><circle cx="1011.60" cy="798.66" r="3.6"/><circle cx="1018.82" cy="798.40" r="3.6"/><circle cx="1026.04" cy="798.09" r="3.6"/><circle cx="1033.27" cy="797.73" r="3.6"/><circle cx="1040.49" cy="797.37" r="3.6"/><circle cx="1047.71" cy="797.01" r="3.6"/><circle cx="1054.94" cy="796.70" r="3.6"/><circle cx="1062.16" cy="796.44" r="3.6"/><circle cx="1069.38" cy="796.26" r="3.6"/><circle cx="1076.60" cy="796.16" r="3.6"/><circle cx="1083.83" cy="796.16" r="3.6"/><circle cx="1091.05" cy="796.26" r="3.6"/><circle cx="1098.27" cy="796.44" r="3.6"/><circle cx="1105.50" cy="796.70" r="3.6"/><circle cx="1112.72" cy="797.01" r="3.6"/><circle cx="1119.94" cy="797.37" r="3.6"/><circle cx="1127.17" cy="797.73" r="3.6"/><circle cx="1134.39" cy="798.09" r="3.6"/><circle cx="1141.61" cy="798.40" r="3.6"/><circle cx="1148.84" cy="798.66" r="3.6"/><circle cx="1156.06" cy="798.84" r="3.6"/><circle cx="1163.28" cy="798.94" r="3.6"/><circle cx="1170.51" cy="798.94" r="3.6"/><circle cx="1177.73" cy="798.84" r="3.6"/><circle cx="1184.95" cy="798.66" r="3.6"/><circle cx="1192.18" cy="798.40" r="3.6"/><circle cx="1199.40" cy="798.60" r="3.6"/></g>
<polyline points="794.90,573.40 802.12,587.40 809.35,596.80 816.57,601.40 823.79,605.60 831.02,592.40 838.24,584.90 845.46,569.80 852.69,558.20 859.91,526.50 867.13,500.60 874.36,486.10 881.58,456.30 888.80,442.00 896.02,438.70 903.25,434.30 910.47,434.30 917.69,435.60 924.92,452.40 932.14,464.10 939.36,481.70 946.59,515.10 953.81,526.30 961.03,539.80 968.26,573.70 975.48,582.00 982.70,593.70 989.93,595.00 997.15,600.70 1004.37,592.40 1011.60,586.70 1018.82,576.30 1026.04,542.60 1033.27,534.80 1040.49,499.80 1047.71,480.10 1054.94,462.80 1062.16,445.20 1069.38,436.80 1076.60,426.60 1083.83,421.10 1091.05,428.90 1098.27,452.50 1105.50,461.80 1112.72,482.00 1119.94,501.10 1127.17,529.20 1134.39,552.50 1141.61,572.70 1148.84,586.20 1156.06,602.20 1163.28,608.30 1170.51,602.20 1177.73,594.30 1184.95,586.70 1192.18,575.50 1199.40,583.10" fill="none" stroke="#fa9b36" stroke-width="2" stroke-linejoin="round" filter="url(#sh)"/>
<g fill="#fa9b36"><circle cx="794.90" cy="573.40" r="3.6"/><circle cx="802.12" cy="587.40" r="3.6"/><circle cx="809.35" cy="596.80" r="3.6"/><circle cx="816.57" cy="601.40" r="3.6"/><circle cx="823.79" cy="605.60" r="3.6"/><circle cx="831.02" cy="592.40" r="3.6"/><circle cx="838.24" cy="584.90" r="3.6"/><circle cx="845.46" cy="569.80" r="3.6"/><circle cx="852.69" cy="558.20" r="3.6"/><circle cx="859.91" cy="526.50" r="3.6"/><circle cx="867.13" cy="500.60" r="3.6"/><circle cx="874.36" cy="486.10" r="3.6"/><circle cx="881.58" cy="456.30" r="3.6"/><circle cx="888.80" cy="442.00" r="3.6"/><circle cx="896.02" cy="438.70" r="3.6"/><circle cx="903.25" cy="434.30" r="3.6"/><circle cx="910.47" cy="434.30" r="3.6"/><circle cx="917.69" cy="435.60" r="3.6"/><circle cx="924.92" cy="452.40" r="3.6"/><circle cx="932.14" cy="464.10" r="3.6"/><circle cx="939.36" cy="481.70" r="3.6"/><circle cx="946.59" cy="515.10" r="3.6"/><circle cx="953.81" cy="526.30" r="3.6"/><circle cx="961.03" cy="539.80" r="3.6"/><circle cx="968.26" cy="573.70" r="3.6"/><circle cx="975.48" cy="582.00" r="3.6"/><circle cx="982.70" cy="593.70" r="3.6"/><circle cx="989.93" cy="595.00" r="3.6"/><circle cx="997.15" cy="600.70" r="3.6"/><circle cx="1004.37" cy="592.40" r="3.6"/><circle cx="1011.60" cy="586.70" r="3.6"/><circle cx="1018.82" cy="576.30" r="3.6"/><circle cx="1026.04" cy="542.60" r="3.6"/><circle cx="1033.27" cy="534.80" r="3.6"/><circle cx="1040.49" cy="499.80" r="3.6"/><circle cx="1047.71" cy="480.10" r="3.6"/><circle cx="1054.94" cy="462.80" r="3.6"/><circle cx="1062.16" cy="445.20" r="3.6"/><circle cx="1069.38" cy="436.80" r="3.6"/><circle cx="1076.60" cy="426.60" r="3.6"/><circle cx="1083.83" cy="421.10" r="3.6"/><circle cx="1091.05" cy="428.90" r="3.6"/><circle cx="1098.27" cy="452.50" r="3.6"/><circle cx="1105.50" cy="461.80" r="3.6"/><circle cx="1112.72" cy="482.00" r="3.6"/><circle cx="1119.94" cy="501.10" r="3.6"/><circle cx="1127.17" cy="529.20" r="3.6"/><circle cx="1134.39" cy="552.50" r="3.6"/><circle cx="1141.61" cy="572.70" r="3.6"/><circle cx="1148.84" cy="586.20" r="3.6"/><circle cx="1156.06" cy="602.20" r="3.6"/><circle cx="1163.28" cy="608.30" r="3.6"/><circle cx="1170.51" cy="602.20" r="3.6"/><circle cx="1177.73" cy="594.30" r="3.6"/><circle cx="1184.95" cy="586.70" r="3.6"/><circle cx="1192.18" cy="575.50" r="3.6"/><circle cx="1199.40" cy="583.10" r="3.6"/></g>
<polyline points="794.90,755.43 802.12,758.74 809.35,761.08 816.57,762.30 823.79,762.30 831.02,761.08 838.24,758.74 845.46,755.43 852.69,751.37 859.91,746.84 867.13,742.16 874.36,737.63 881.58,733.57 888.80,730.26 896.02,727.92 903.25,726.70 910.47,726.70 917.69,727.92 924.92,730.26 932.14,733.57 939.36,737.63 946.59,742.16 953.81,746.84 961.03,751.37 968.26,755.43 975.48,758.74 982.70,761.08 989.93,762.30 997.15,762.30 1004.37,761.08 1011.60,758.74 1018.82,755.43 1026.04,751.37 1033.27,746.84 1040.49,742.16 1047.71,737.63 1054.94,733.57 1062.16,730.26 1069.38,727.92 1076.60,726.70 1083.83,726.70 1091.05,727.92 1098.27,730.26 1105.50,733.57 1112.72,737.63 1119.94,742.16 1127.17,746.84 1134.39,751.37 1141.61,755.43 1148.84,758.74 1156.06,761.08 1163.28,762.30 1170.51,762.30 1177.73,761.08 1184.95,758.74 1192.18,755.43 1199.40,758.60" fill="none" stroke="#c0604f" stroke-width="2" stroke-linejoin="round" filter="url(#sh)"/>
<g fill="#c0604f"><circle cx="794.90" cy="755.43" r="3.6"/><circle cx="802.12" cy="758.74" r="3.6"/><circle cx="809.35" cy="761.08" r="3.6"/><circle cx="816.57" cy="762.30" r="3.6"/><circle cx="823.79" cy="762.30" r="3.6"/><circle cx="831.02" cy="761.08" r="3.6"/><circle cx="838.24" cy="758.74" r="3.6"/><circle cx="845.46" cy="755.43" r="3.6"/><circle cx="852.69" cy="751.37" r="3.6"/><circle cx="859.91" cy="746.84" r="3.6"/><circle cx="867.13" cy="742.16" r="3.6"/><circle cx="874.36" cy="737.63" r="3.6"/><circle cx="881.58" cy="733.57" r="3.6"/><circle cx="888.80" cy="730.26" r="3.6"/><circle cx="896.02" cy="727.92" r="3.6"/><circle cx="903.25" cy="726.70" r="3.6"/><circle cx="910.47" cy="726.70" r="3.6"/><circle cx="917.69" cy="727.92" r="3.6"/><circle cx="924.92" cy="730.26" r="3.6"/><circle cx="932.14" cy="733.57" r="3.6"/><circle cx="939.36" cy="737.63" r="3.6"/><circle cx="946.59" cy="742.16" r="3.6"/><circle cx="953.81" cy="746.84" r="3.6"/><circle cx="961.03" cy="751.37" r="3.6"/><circle cx="968.26" cy="755.43" r="3.6"/><circle cx="975.48" cy="758.74" r="3.6"/><circle cx="982.70" cy="761.08" r="3.6"/><circle cx="989.93" cy="762.30" r="3.6"/><circle cx="997.15" cy="762.30" r="3.6"/><circle cx="1004.37" cy="761.08" r="3.6"/><circle cx="1011.60" cy="758.74" r="3.6"/><circle cx="1018.82" cy="755.43" r="3.6"/><circle cx="1026.04" cy="751.37" r="3.6"/><circle cx="1033.27" cy="746.84" r="3.6"/><circle cx="1040.49" cy="742.16" r="3.6"/><circle cx="1047.71" cy="737.63" r="3.6"/><circle cx="1054.94" cy="733.57" r="3.6"/><circle cx="1062.16" cy="730.26" r="3.6"/><circle cx="1069.38" cy="727.92" r="3.6"/><circle cx="1076.60" cy="726.70" r="3.6"/><circle cx="1083.83" cy="726.70" r="3.6"/><circle cx="1091.05" cy="727.92" r="3.6"/><circle cx="1098.27" cy="730.26" r="3.6"/><circle cx="1105.50" cy="733.57" r="3.6"/><circle cx="1112.72" cy="737.63" r="3.6"/><circle cx="1119.94" cy="742.16" r="3.6"/><circle cx="1127.17" cy="746.84" r="3.6"/><circle cx="1134.39" cy="751.37" r="3.6"/><circle cx="1141.61" cy="755.43" r="3.6"/><circle cx="1148.84" cy="758.74" r="3.6"/><circle cx="1156.06" cy="761.08" r="3.6"/><circle cx="1163.28" cy="762.30" r="3.6"/><circle cx="1170.51" cy="762.30" r="3.6"/><circle cx="1177.73" cy="761.08" r="3.6"/><circle cx="1184.95" cy="758.74" r="3.6"/><circle cx="1192.18" cy="755.43" r="3.6"/><circle cx="1199.40" cy="758.60" r="3.6"/></g>
<polyline points="794.90,622.47 802.12,633.16 809.35,640.22 816.57,643.60 823.79,647.80 831.02,635.82 838.24,630.66 845.46,618.87 852.69,611.33 859.91,584.16 867.13,562.94 874.36,552.97 881.58,527.23 888.80,516.24 896.02,515.28 903.25,512.10 910.47,512.10 917.69,512.18 924.92,526.64 932.14,535.03 939.36,548.57 946.59,577.44 953.81,583.96 961.03,592.93 968.26,622.77 975.48,627.76 982.70,637.12 989.93,637.20 997.15,642.90 1004.37,635.82 1011.60,632.46 1018.82,625.37 1026.04,595.73 1033.27,592.46 1040.49,562.14 1047.71,546.97 1054.94,533.73 1062.16,519.44 1069.38,513.38 1076.60,504.40 1083.83,498.90 1091.05,505.48 1098.27,526.74 1105.50,532.73 1112.72,548.87 1119.94,563.44 1127.17,586.86 1134.39,605.63 1141.61,621.77 1148.84,631.96 1156.06,645.62 1163.28,650.50 1170.51,644.40 1177.73,637.72 1184.95,632.46 1192.18,624.57 1199.40,629.00" fill="none" stroke="#91c356" stroke-width="2" stroke-linejoin="round" filter="url(#sh)"/>
<g fill="#91c356"><circle cx="794.90" cy="622.47" r="3.6"/><circle cx="802.12" cy="633.16" r="3.6"/><circle cx="809.35" cy="640.22" r="3.6"/><circle cx="816.57" cy="643.60" r="3.6"/><circle cx="823.79" cy="647.80" r="3.6"/><circle cx="831.02" cy="635.82" r="3.6"/><circle cx="838.24" cy="630.66" r="3.6"/><circle cx="845.46" cy="618.87" r="3.6"/><circle cx="852.69" cy="611.33" r="3.6"/><circle cx="859.91" cy="584.16" r="3.6"/><circle cx="867.13" cy="562.94" r="3.6"/><circle cx="874.36" cy="552.97" r="3.6"/><circle cx="881.58" cy="527.23" r="3.6"/><circle cx="888.80" cy="516.24" r="3.6"/><circle cx="896.02" cy="515.28" r="3.6"/><circle cx="903.25" cy="512.10" r="3.6"/><circle cx="910.47" cy="512.10" r="3.6"/><circle cx="917.69" cy="512.18" r="3.6"/><circle cx="924.92" cy="526.64" r="3.6"/><circle cx="932.14" cy="535.03" r="3.6"/><circle cx="939.36" cy="548.57" r="3.6"/><circle cx="946.59" cy="577.44" r="3.6"/><circle cx="953.81" cy="583.96" r="3.6"/><circle cx="961.03" cy="592.93" r="3.6"/><circle cx="968.26" cy="622.77" r="3.6"/><circle cx="975.48" cy="627.76" r="3.6"/><circle cx="982.70" cy="637.12" r="3.6"/><circle cx="989.93" cy="637.20" r="3.6"/><circle cx="997.15" cy="642.90" r="3.6"/><circle cx="1004.37" cy="635.82" r="3.6"/><circle cx="1011.60" cy="632.46" r="3.6"/><circle cx="1018.82" cy="625.37" r="3.6"/><circle cx="1026.04" cy="595.73" r="3.6"/><circle cx="1033.27" cy="592.46" r="3.6"/><circle cx="1040.49" cy="562.14" r="3.6"/><circle cx="1047.71" cy="546.97" r="3.6"/><circle cx="1054.94" cy="533.73" r="3.6"/><circle cx="1062.16" cy="519.44" r="3.6"/><circle cx="1069.38" cy="513.38" r="3.6"/><circle cx="1076.60" cy="504.40" r="3.6"/><circle cx="1083.83" cy="498.90" r="3.6"/><circle cx="1091.05" cy="505.48" r="3.6"/><circle cx="1098.27" cy="526.74" r="3.6"/><circle cx="1105.50" cy="532.73" r="3.6"/><circle cx="1112.72" cy="548.87" r="3.6"/><circle cx="1119.94" cy="563.44" r="3.6"/><circle cx="1127.17" cy="586.86" r="3.6"/><circle cx="1134.39" cy="605.63" r="3.6"/><circle cx="1141.61" cy="621.77" r="3.6"/><circle cx="1148.84" cy="631.96" r="3.6"/><circle cx="1156.06" cy="645.62" r="3.6"/><circle cx="1163.28" cy="650.50" r="3.6"/><circle cx="1170.51" cy="644.40" r="3.6"/><circle cx="1177.73" cy="637.72" r="3.6"/><circle cx="1184.95" cy="632.46" r="3.6"/><circle cx="1192.18" cy="624.57" r="3.6"/><circle cx="1199.40" cy="629.00" r="3.6"/></g>
<polyline points="794.90,804.50 802.12,804.50 809.35,804.50 816.57,804.50 823.79,804.50 831.02,804.50 838.24,804.50 845.46,804.50 852.69,804.50 859.91,804.50 867.13,804.50 874.36,804.50 881.58,804.50 888.80,804.50 896.02,804.50 903.25,804.50 910.47,804.50 917.69,804.50 924.92,804.50 932.14,804.50 939.36,804.50 946.59,804.50 953.81,804.50 961.03,804.50 968.26,804.50 975.48,804.50 982.70,804.50 989.93,804.50 997.15,804.50 1004.37,804.50 1011.60,804.50 1018.82,804.50 1026.04,804.50 1033.27,804.50 1040.49,804.50 1047.71,804.50 1054.94,804.50 1062.16,804.50 1069.38,804.50 1076.60,804.50 1083.83,804.50 1091.05,804.50 1098.27,804.50 1105.50,804.50 1112.72,804.50 1119.94,804.50 1127.17,804.50 1134.39,804.50 1141.61,804.50 1148.84,804.50 1156.06,804.50 1163.28,804.50 1170.51,804.50 1177.73,804.50 1184.95,804.50 1192.18,804.50 1199.40,804.50" fill="none" stroke="#9b6b96" stroke-width="2" stroke-linejoin="round" filter="url(#sh)"/>
<g fill="#9b6b96"><circle cx="794.90" cy="804.50" r="3.6"/><circle cx="802.12" cy="804.50" r="3.6"/><circle cx="809.35" cy="804.50" r="3.6"/><circle cx="816.57" cy="804.50" r="3.6"/><circle cx="823.79" cy="804.50" r="3.6"/><circle cx="831.02" cy="804.50" r="3.6"/><circle cx="838.24" cy="804.50" r="3.6"/><circle cx="845.46" cy="804.50" r="3.6"/><circle cx="852.69" cy="804.50" r="3.6"/><circle cx="859.91" cy="804.50" r="3.6"/><circle cx="867.13" cy="804.50" r="3.6"/><circle cx="874.36" cy="804.50" r="3.6"/><circle cx="881.58" cy="804.50" r="3.6"/><circle cx="888.80" cy="804.50" r="3.6"/><circle cx="896.02" cy="804.50" r="3.6"/><circle cx="903.25" cy="804.50" r="3.6"/><circle cx="910.47" cy="804.50" r="3.6"/><circle cx="917.69" cy="804.50" r="3.6"/><circle cx="924.92" cy="804.50" r="3.6"/><circle cx="932.14" cy="804.50" r="3.6"/><circle cx="939.36" cy="804.50" r="3.6"/><circle cx="946.59" cy="804.50" r="3.6"/><circle cx="953.81" cy="804.50" r="3.6"/><circle cx="961.03" cy="804.50" r="3.6"/><circle cx="968.26" cy="804.50" r="3.6"/><circle cx="975.48" cy="804.50" r="3.6"/><circle cx="982.70" cy="804.50" r="3.6"/><circle cx="989.93" cy="804.50" r="3.6"/><circle cx="997.15" cy="804.50" r="3.6"/><circle cx="1004.37" cy="804.50" r="3.6"/><circle cx="1011.60" cy="804.50" r="3.6"/><circle cx="1018.82" cy="804.50" r="3.6"/><circle cx="1026.04" cy="804.50" r="3.6"/><circle cx="1033.27" cy="804.50" r="3.6"/><circle cx="1040.49" cy="804.50" r="3.6"/><circle cx="1047.71" cy="804.50" r="3.6"/><circle cx="1054.94" cy="804.50" r="3.6"/><circle cx="1062.16" cy="804.50" r="3.6"/><circle cx="1069.38" cy="804.50" r="3.6"/><circle cx="1076.60" cy="804.50" r="3.6"/><circle cx="1083.83" cy="804.50" r="3.6"/><circle cx="1091.05" cy="804.50" r="3.6"/><circle cx="1098.27" cy="804.50" r="3.6"/><circle cx="1105.50" cy="804.50" r="3.6"/><circle cx="1112.72" cy="804.50" r="3.6"/><circle cx="1119.94" cy="804.50" r="3.6"/><circle cx="1127.17" cy="804.50" r="3.6"/><circle cx="1134.39" cy="804.50" r="3.6"/><circle cx="1141.61" cy="804.50" r="3.6"/><circle cx="1148.84" cy="804.50" r="3.6"/><circle cx="1156.06" cy="804.50" r="3.6"/><circle cx="1163.28" cy="804.50" r="3.6"/><circle cx="1170.51" cy="804.50" r="3.6"/><circle cx="1177.73" cy="804.50" r="3.6"/><circle cx="1184.95" cy="804.50" r="3.6"/><circle cx="1192.18" cy="804.50" r="3.6"/><circle cx="1199.40" cy="804.50" r="3.6"/></g>
</svg>
<div class="b" style="left:742px;top:855px;width:99px;height:20px;background:#5a6469;"></div>
<div class="b" style="left:746px;top:859px;width:9px;height:9px;background:linear-gradient(#f2f2f2,#d9d9d9);border:0.5px solid #aaa;border-radius:1px"></div>
<svg class="b" style="left:746.5px;top:859px" width="10" height="10" viewBox="0 0 10 10"><path d="M2.3 5.2l2 2.2L8 2.3" stroke="#2a2a2a" stroke-width="1.7" fill="none"/></svg>
<div class="t" style="left:761.50px;top:859.11px;font-size:10.5px;line-height:10.5px;color:#fff;font-weight:bold;letter-spacing:-0.35px;">Visits</div>
<div class="b" style="left:845px;top:855px;width:99px;height:20px;background:#3e5ba5;"></div>
<div class="b" style="left:849px;top:859px;width:9px;height:9px;background:linear-gradient(#f2f2f2,#d9d9d9);border:0.5px solid #aaa;border-radius:1px"></div>
<svg class="b" style="left:849.5px;top:859px" width="10" height="10" viewBox="0 0 10 10"><path d="M2.3 5.2l2 2.2L8 2.3" stroke="#2a2a2a" stroke-width="1.7" fill="none"/></svg>
<div class="t" style="left:864.50px;top:859.11px;font-size:10.5px;line-height:10.5px;color:#fff;font-weight:bold;letter-spacing:-0.35px;">Clicks</div>
<div class="b" style="left:949px;top:855px;width:99px;height:20px;background:#5bb5e3;"></div>
<div class="b" style="left:953px;top:859px;width:9px;height:9px;background:linear-gradient(#f2f2f2,#d9d9d9);border:0.5px solid #aaa;border-radius:1px"></div>
<svg class="b" style="left:953.5px;top:859px" width="10" height="10" viewBox="0 0 10 10"><path d="M2.3 5.2l2 2.2L8 2.3" stroke="#2a2a2a" stroke-width="1.7" fill="none"/></svg>
<div class="t" style="left:968.50px;top:859.11px;font-size:10.5px;line-height:10.5px;color:#fff;font-weight:bold;letter-spacing:-0.35px;">Conversions</div>
<div class="b" style="left:1052px;top:855px;width:99px;height:20px;background:#fb9a35;"></div>
<div class="b" style="left:1056px;top:859px;width:9px;height:9px;background:linear-gradient(#f2f2f2,#d9d9d9);border:0.5px solid #aaa;border-radius:1px"></div>
<svg class="b" style="left:1056.5px;top:859px" width="10" height="10" viewBox="0 0 10 10"><path d="M2.3 5.2l2 2.2L8 2.3" stroke="#2a2a2a" stroke-width="1.7" fill="none"/></svg>
<div class="t" style="left:1071.50px;top:859.11px;font-size:10.5px;line-height:10.5px;color:#fff;font-weight:bold;letter-spacing:-0.08px;">Revenue</div>
<div class="b" style="left:1156px;top:855px;width:99px;height:20px;background:#c0604f;"></div>
<div class="b" style="left:1160px;top:859px;width:9px;height:9px;background:linear-gradient(#f2f2f2,#d9d9d9);border:0.5px solid #aaa;border-radius:1px"></div>
<svg class="b" style="left:1160.5px;top:859px" width="10" height="10" viewBox="0 0 10 10"><path d="M2.3 5.2l2 2.2L8 2.3" stroke="#2a2a2a" stroke-width="1.7" fill="none"/></svg>
<div class="t" style="left:1175.50px;top:859.11px;font-size:10.5px;line-height:10.5px;color:#fff;font-weight:bold;letter-spacing:-0.35px;">Cost</div>
<div class="b" style="left:1259px;top:855px;width:99px;height:20px;background:#91c457;"></div>
<div class="b" style="left:1263px;top:859px;width:9px;height:9px;background:linear-gradient(#f2f2f2,#d9d9d9);border:0.5px solid #aaa;border-radius:1px"></div>
<svg class="b" style="left:1263.5px;top:859px" width="10" height="10" viewBox="0 0 10 10"><path d="M2.3 5.2l2 2.2L8 2.3" stroke="#2a2a2a" stroke-width="1.7" fill="none"/></svg>
<div class="t" style="left:1278.50px;top:859.11px;font-size:10.5px;line-height:10.5px;color:#fff;font-weight:bold;letter-spacing:-0.35px;">Profit</div>
<div class="b" style="left:742px;top:880px;width:99px;height:21px;background:#9b6c96;"></div>
<div class="b" style="left:746px;top:884px;width:9px;height:9px;background:linear-gradient(#f2f2f2,#d9d9d9);border:0.5px solid #aaa;border-radius:1px"></div>
<svg class="b" style="left:746.5px;top:884px" width="10" height="10" viewBox="0 0 10 10"><path d="M2.3 5.2l2 2.2L8 2.3" stroke="#2a2a2a" stroke-width="1.7" fill="none"/></svg>
<div class="t" style="left:761.50px;top:884.11px;font-size:10.5px;line-height:10.5px;color:#fff;font-weight:bold;letter-spacing:-0.35px;">Impressions</div>
</body></html>
